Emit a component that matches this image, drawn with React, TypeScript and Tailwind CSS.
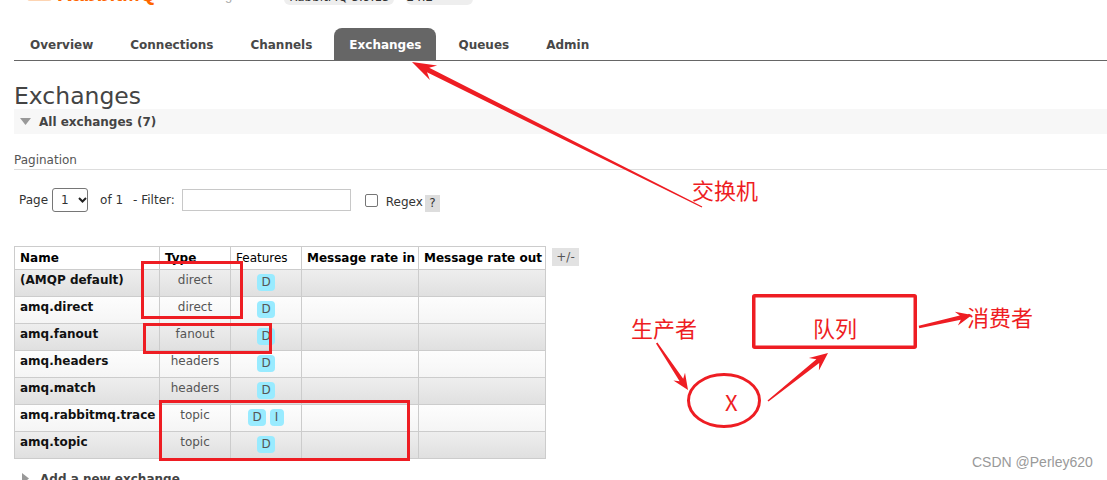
import React from "react";

const RED = "#ee1d23";

const tabs = ["Overview", "Connections", "Channels", "Exchanges", "Queues", "Admin"];

const rows = [
    { name: "(AMQP default)", type: "direct", features: ["D"] },
    { name: "amq.direct", type: "direct", features: ["D"] },
    { name: "amq.fanout", type: "fanout", features: ["D"] },
    { name: "amq.headers", type: "headers", features: ["D"] },
    { name: "amq.match", type: "headers", features: ["D"] },
    { name: "amq.rabbitmq.trace", type: "topic", features: ["D", "I"] },
    { name: "amq.topic", type: "topic", features: ["D"] },
];

const Header = () => (
    // only the bottom few pixels of the page header are in view
    <div className="flex h-[6px] items-end overflow-hidden">
        <div className="ml-[13px] mb-[5px] h-[30px] w-[25px] rounded-[3px] bg-[#fdd4b2]" />
        <span className="ml-[5px] font-['Liberation_Sans',sans-serif] text-[21px] font-bold leading-[24px] text-[#ff6600]">
            RabbitMQ
        </span>
        <span className="ml-[14px] mb-[2px] font-['Liberation_Sans',sans-serif] text-[13px] leading-[16px] text-[#aaa]">
            TM Management
        </span>
        <span className="ml-[16px] mb-[1px] flex h-[22px] w-[110px] items-end justify-center rounded-[6px] bg-[#eee] pb-[1px] text-[12px] leading-[14px] text-[#333]">
            RabbitMQ 3.9.13
        </span>
        <span className="ml-[12px] mb-[1px] flex h-[22px] w-[67px] items-end justify-center rounded-[6px] bg-[#eee] pb-[1px] text-[12px] leading-[14px] text-[#333]">
            Erlang 24.2
        </span>
    </div>
);

const Tabs = () => (
    <nav className="mt-[22px] flex h-[33px] items-end gap-[7px] border-b border-[#666] pl-px">
        {tabs.map((t) => (
            <div
                key={t}
                className={`flex h-[32px] items-center rounded-t-[8px] px-[15px] pt-px text-[12px] font-bold ${
                    t === "Exchanges" ? "bg-[#666] text-white" : "text-[#484848]"
                }`}
            >
                {t}
            </div>
        ))}
    </nav>
);

const Filter = () => (
    <div className="mt-[18px] flex h-[24px] items-center pl-[5px] text-[12px] text-[#333]">
        <span>Page</span>
        <div className="ml-[4px] flex h-[24px] w-[36px] items-center rounded-[3px] border border-[#767676] bg-white pl-[8px]">
            <span>1</span>
            <svg width="9" height="6" viewBox="0 0 9 6" className="ml-[9px]">
                <polyline points="1,1 4.5,4.5 8,1" fill="none" stroke="#222" strokeWidth="2" />
            </svg>
        </div>
        <span className="ml-[12px]">of 1</span>
        <span className="ml-[10px]">- Filter:</span>
        <div className="ml-[7px] h-[22px] w-[169px] border border-[#c8c8c8] bg-white" />
        <div className="ml-[14px] h-[13px] w-[13px] rounded-[2px] border border-[#767676] bg-white" />
        <span className="ml-[8px] mt-[4px]">Regex</span>
        <span className="ml-[2px] mt-[6px] h-[17px] w-[15px] bg-[#ddd] text-center leading-[17px] text-[#333]">?</span>
    </div>
);

const widths = ["w-[145px]", "w-[71px]", "w-[71px]", "w-[117px]", "w-[126px]"];

const ExchangeTable = () => (
    <div className="mt-[34px] flex items-start">
        <div className="w-[532px] border border-[#ccc] text-[12px]">
            <div className="flex h-[22px] bg-white leading-[22px] text-black">
                <div className={`${widths[0]} border-r border-[#ccc] pl-[5px] font-bold`}>Name</div>
                <div className={`${widths[1]} border-r border-[#ccc] pl-[5px] font-bold`}>Type</div>
                <div className={`${widths[2]} border-r border-[#ccc] pl-[5px]`}>Features</div>
                <div className={`${widths[3]} border-r border-[#ccc] pl-[5px] font-bold`}>Message rate in</div>
                <div className={`${widths[4]} pl-[5px] font-bold`}>Message rate out</div>
            </div>
            {rows.map((r, i) => (
                <div
                    key={r.name}
                    className={`flex h-[27px] border-t border-[#ccc] bg-linear-to-b ${
                        i % 2 === 0 ? "from-[#eeeeee] to-[#e0e0e0]" : "from-[#fdfdfd] to-[#f5f5f5]"
                    }`}
                >
                    <div className={`${widths[0]} border-r border-[#ccc] pl-[5px] pt-[2px] font-bold leading-[16px] text-[#111]`}>
                        {r.name}
                    </div>
                    <div className={`${widths[1]} border-r border-[#ccc] pt-[2px] text-center leading-[16px] text-[#555]`}>
                        {r.type}
                    </div>
                    <div className={`${widths[2]} flex justify-center gap-[4px] border-r border-[#ccc] pt-[4px]`}>
                        {r.features.map((f) => (
                            <span
                                key={f}
                                className="h-[17px] min-w-[14px] rounded-[4px] bg-[#99ebff] px-[4px] text-center leading-[17px] text-[#555]"
                            >
                                {f}
                            </span>
                        ))}
                    </div>
                    <div className={`${widths[3]} border-r border-[#ccc]`} />
                    <div className={widths[4]} />
                </div>
            ))}
        </div>
        <span className="ml-[6px] mt-[2px] h-[18px] w-[27px] bg-[#e2e2e2] text-center text-[12px] leading-[18px] text-[#555]">
            +/-
        </span>
    </div>
);

const Annotations = () => (
    <>
        <svg className="pointer-events-none absolute inset-0" width="1107" height="480" viewBox="0 0 1107 480">
            {/* arrow to the Exchanges tab */}
            <polygon
                points="702.3,206.5 429.2,67.8 437.1,65.6 412,62 429.9,79.9 427,72.3 701.7,207.5"
                fill={RED}
            />
            {/* boxes round the types */}
            <rect x="142.5" y="262.5" width="99" height="55" fill="none" stroke={RED} strokeWidth="3" />
            <rect x="144.5" y="324.5" width="126" height="28" fill="none" stroke={RED} strokeWidth="3" />
            <rect x="160.5" y="401.5" width="248" height="58" fill="none" stroke={RED} strokeWidth="3" />
            {/* producer -> exchange -> queue -> consumer */}
            <polygon points="656,343.4 679.6,381.2 673.4,380.4 688,390 685,372.7 683.2,378.8 657.4,342.6" fill={RED} />
            <ellipse cx="724" cy="400.5" rx="35.5" ry="26" fill="none" stroke={RED} strokeWidth="3" />
            <polygon points="768.5,401.6 819.2,362.9 818.9,370.5 828,353 808.9,358 816.4,359.3 767.5,400.4" fill={RED} />
            <rect x="753.75" y="295.75" width="161.5" height="51.5" rx="1" fill="none" stroke={RED} strokeWidth="3.5" />
            <polygon points="919.3,328.2 960.8,319.8 957.9,325.4 972,315 954.8,311.7 959.8,315.5 918.7,325.8" fill={RED} />
        </svg>
        <span className="absolute left-[692px] top-[178px] font-['Noto_Sans_CJK_SC',sans-serif] text-[22px] leading-[22px] text-[#ee1d23]">
            交换机
        </span>
        <span className="absolute left-[631px] top-[316px] font-['Noto_Sans_CJK_SC',sans-serif] text-[22px] leading-[22px] text-[#ee1d23]">
            生产者
        </span>
        <span className="absolute left-[813px] top-[316px] font-['Noto_Sans_CJK_SC',sans-serif] text-[22px] leading-[22px] text-[#ee1d23]">
            队列
        </span>
        <span className="absolute left-[967px] top-[305px] font-['Noto_Sans_CJK_SC',sans-serif] text-[22px] leading-[22px] text-[#ee1d23]">
            消费者
        </span>
        <span className="absolute left-[725px] top-[390px] font-['Noto_Sans_CJK_SC',sans-serif] text-[22px] leading-[23px] text-[#ee1d23]">
            X
        </span>
        <span className="absolute left-[972px] top-[455px] font-['Liberation_Sans',sans-serif] text-[14px] leading-[14px] text-[#999]">
            CSDN @Perley620
        </span>
    </>
);

export default function App() {
    return (
        <div className="relative h-[480px] w-[1107px] overflow-hidden bg-white font-['DejaVu_Sans',sans-serif] text-[12px] text-[#333]">
            <div className="pl-[14px]">
                <Header />
                <Tabs />
                <h1 className="mt-[23px] h-[24px] text-[23.5px] font-normal leading-[24px] text-[#444]">Exchanges</h1>
                <div className="mt-px flex h-[25px] items-center bg-[#f7f7f7]">
                    <svg width="11" height="7" viewBox="0 0 11 7" className="ml-[6px]">
                        <polygon points="0,0 11,0 5.5,7" fill="#999" />
                    </svg>
                    <span className="ml-[8px] font-bold text-[#444]">All exchanges (7)</span>
                </div>
                <div className="mt-[17px] h-[19px] border-b border-[#ddd] leading-[19px] text-[#555]">Pagination</div>
                <Filter />
                <ExchangeTable />
                <div className="mt-[7px] flex h-[25px] items-center">
                    <svg width="7" height="11" viewBox="0 0 7 11" className="ml-[8px]">
                        <polygon points="0,0 7,5.5 0,11" fill="#999" />
                    </svg>
                    <span className="ml-[11px] font-bold text-[#444]">Add a new exchange</span>
                </div>
            </div>
            <Annotations />
        </div>
    );
}
